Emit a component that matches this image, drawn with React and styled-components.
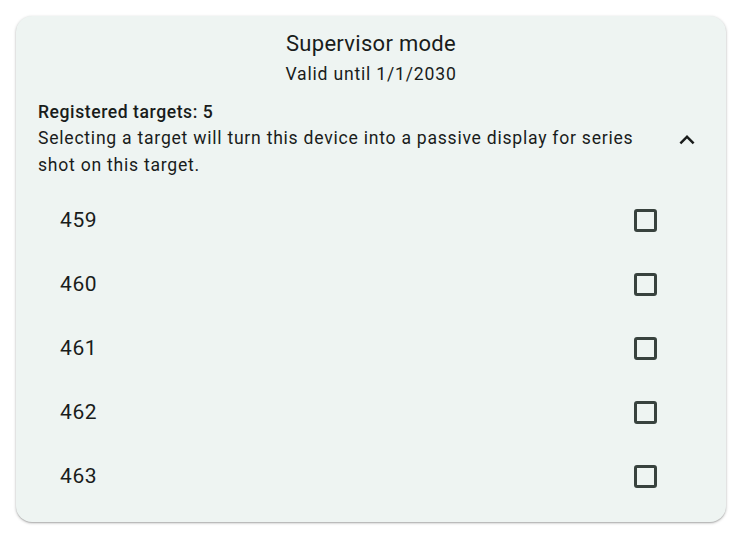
import React, { useState } from 'react';
import styled, { createGlobalStyle } from 'styled-components';

const GlobalStyle = createGlobalStyle`
  body {
    margin: 0;
    background: #ffffff;
    font-family: Roboto, "Noto Sans", sans-serif;
    color: #191c1b;
  }
`;

const Page = styled.div`
  padding: 16px;
`;

const Card = styled.section`
  background: #eef4f2;
  border-radius: 16px;
  box-shadow: 0 1px 3px rgba(0, 0, 0, 0.28), 0 1px 1px rgba(0, 0, 0, 0.12);
  padding: 13px 22px 14px;
`;

const Title = styled.h2`
  margin: 0;
  font-size: 22px;
  font-weight: 400;
  line-height: 30px;
  letter-spacing: 0.3px;
  text-align: center;
`;

const Subtitle = styled.div`
  margin-top: 2px;
  font-size: 17.6px;
  line-height: 26px;
  text-align: center;
  letter-spacing: 0.8px;
`;

const Section = styled.div`
  display: flex;
  align-items: center;
  gap: 16px;
  margin-top: 13px;
`;

const SectionText = styled.div`
  flex: 1;
`;

const SectionTitle = styled.div`
  font-size: 17.6px;
  font-weight: 500;
  line-height: 25px;
  letter-spacing: 0.55px;
`;

const Description = styled.div`
  font-size: 17.6px;
  line-height: 27px;
  letter-spacing: 0.75px;
`;

const ExpandButton = styled.button`
  width: 40px;
  height: 40px;
  border: none;
  background: none;
  padding: 0;
  margin-right: -3px;
  display: flex;
  align-items: center;
  justify-content: center;
  color: #191c1b;
  cursor: pointer;
`;

const List = styled.ul`
  list-style: none;
  margin: 9px 0 0;
  padding: 0;
`;

const Row = styled.li`
  height: 64px;
  display: flex;
  align-items: center;
  justify-content: space-between;
  padding: 0 47px 0 22px;
`;

const Label = styled.span`
  font-size: 21px;
  letter-spacing: 0.6px;
`;

const Box = styled.span`
  width: 23px;
  height: 23px;
  box-sizing: border-box;
  border: 3px solid #38423e;
  border-radius: 3px;
  background: ${({ checked }) => (checked ? '#38423e' : 'transparent')};
  cursor: pointer;
`;

const targets = [459, 460, 461, 462, 463];

const App = () => {
  const [checked, setChecked] = useState({});
  return (
    <Page>
      <GlobalStyle />
      <Card>
        <Title>Supervisor mode</Title>
        <Subtitle>Valid until 1/1/2030</Subtitle>
        <Section>
          <SectionText>
            <SectionTitle>Registered targets: 5</SectionTitle>
            <Description>
              Selecting a target will turn this device into a passive display for series shot on this target.
            </Description>
          </SectionText>
          <ExpandButton aria-label="collapse">
            <svg width="30" height="30" viewBox="0 0 24 24" fill="currentColor">
              <path d="M7.41 15.41 12 10.83l4.59 4.58L18 14l-6-6-6 6z" />
            </svg>
          </ExpandButton>
        </Section>
        <List>
          {targets.map((t) => (
            <Row key={t}>
              <Label>{t}</Label>
              <Box
                checked={checked[t]}
                onClick={() => setChecked({ ...checked, [t]: !checked[t] })}
              />
            </Row>
          ))}
        </List>
      </Card>
    </Page>
  );
};

export default App;
